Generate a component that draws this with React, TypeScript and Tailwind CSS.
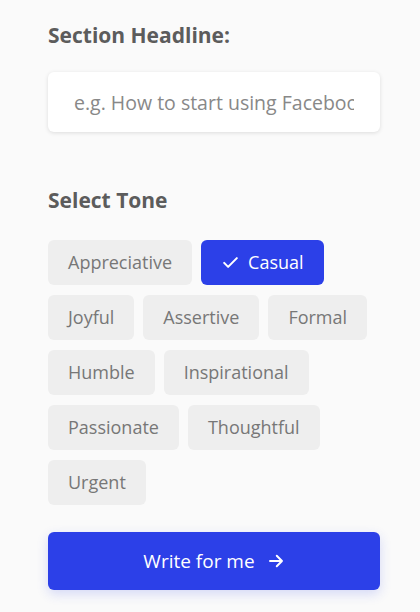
import * as React from 'react'

const TONES = [
  'Appreciative',
  'Casual',
  'Joyful',
  'Assertive',
  'Formal',
  'Humble',
  'Inspirational',
  'Passionate',
  'Thoughtful',
  'Urgent',
]

export default function App() {
  const [tone, setTone] = React.useState('Casual')
  const [headline, setHeadline] = React.useState('')

  return (
    <div className="bg-[#fafafa] min-h-screen font-['Open_Sans',sans-serif] pl-12 pr-10 pt-[21px] pb-6">
      <h2 className="text-[21px] font-bold text-[#5c5c5c] leading-[28px]">Section Headline:</h2>
      <input
        type="text"
        value={headline}
        onChange={(e) => setHeadline(e.target.value)}
        placeholder="e.g. How to start using Facebook Ads for my business"
        className="mt-[23px] w-full h-[60px] bg-white rounded-md px-[26px] text-[19.5px] text-[#555] placeholder:text-[#888] shadow-[0_1px_4px_rgba(0,0,0,0.12)] outline-none"
      />

      <h2 className="mt-[54px] text-[21px] font-bold text-[#5c5c5c] leading-[28px]">Select Tone</h2>
      <div className="mt-[26px] flex flex-wrap gap-x-[9px] gap-y-[10px]">
        {TONES.map((t) => {
          const active = t === tone
          return (
            <button
              key={t}
              type="button"
              onClick={() => setTone(t)}
              className={
                active
                  ? 'h-[45px] px-5 rounded-md bg-[#2c40e8] text-white text-[18px] flex items-center gap-2'
                  : 'h-[45px] px-5 rounded-md bg-[#eeeeee] text-[#777] text-[18px] flex items-center'
              }
            >
              {active && (
                <svg width="19" height="19" viewBox="0 0 24 24" fill="none" stroke="currentColor" strokeWidth="2.6" strokeLinecap="round" strokeLinejoin="round">
                  <path d="M4 12.5l5 5L20 6.5" />
                </svg>
              )}
              {t}
            </button>
          )
        })}
      </div>

      <button
        type="button"
        className="mt-[27px] w-full h-[58px] rounded-md bg-[#2c40e8] text-white text-[19px] flex items-center justify-center gap-3 shadow-[0_4px_12px_rgba(44,64,232,0.18)]"
      >
        Write for me
        <svg width="18" height="18" viewBox="0 0 24 24" fill="none" stroke="currentColor" strokeWidth="2.6" strokeLinecap="round" strokeLinejoin="round">
          <path d="M4 12h16M13 5l7 7-7 7" />
        </svg>
      </button>
    </div>
  )
}
